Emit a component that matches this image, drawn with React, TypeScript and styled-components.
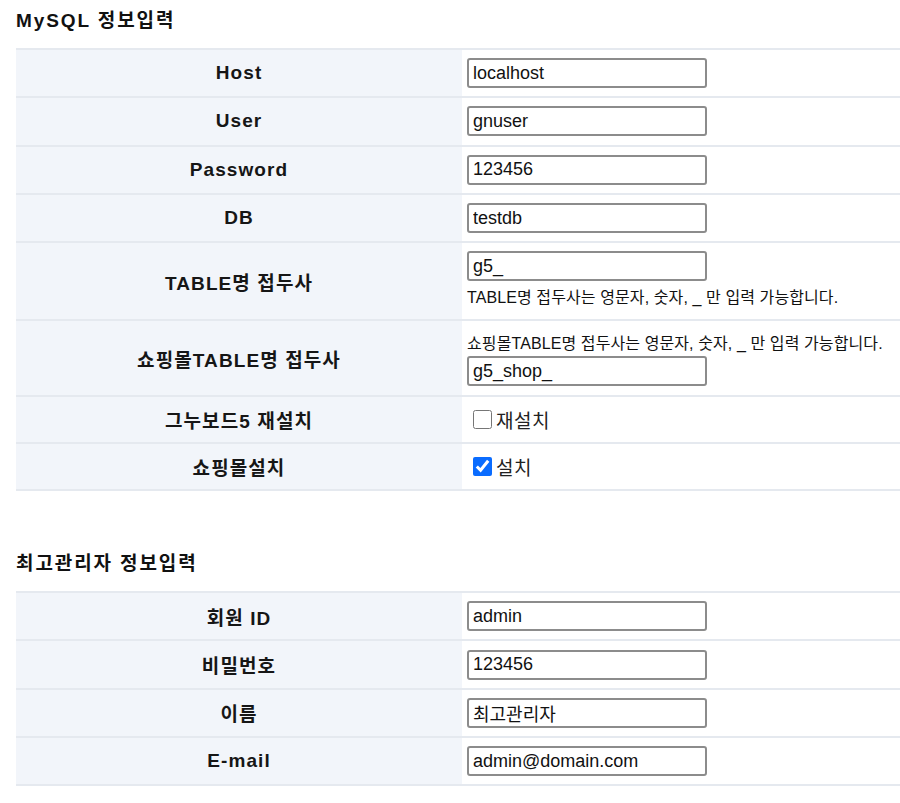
import React from 'react'
import styled, { createGlobalStyle } from 'styled-components'

const GlobalStyle = createGlobalStyle`
  body {
    margin: 0;
    background: #ffffff;
    font-family: "Liberation Sans", "Noto Sans CJK KR", sans-serif;
    color: #111111;
  }
`

const Page = styled.div`
  padding: 0 0 20px 16px;
  width: 884px;
`

const Title = styled.h2<{ top: number }>`
  margin: ${props => props.top}px 0 14px;
  font-size: 19px;
  line-height: 26px;
  font-weight: bold;
  letter-spacing: 1.9px;
`

const Table = styled.div`
  border-top: 2px solid #e5e9ef;
`

const Row = styled.div<{ h: number }>`
  display: grid;
  grid-template-columns: 446px 1fr;
  min-height: ${props => props.h}px;
  border-bottom: 2px solid #e5e9ef;
`

const Head = styled.div`
  background: #f2f5fa;
  display: flex;
  align-items: center;
  justify-content: center;
  font-size: 19px;
  font-weight: bold;
  letter-spacing: 1.1px;
  color: #161616;
`

const Cell = styled.div<{ pad?: string }>`
  display: flex;
  flex-direction: column;
  justify-content: center;
  align-items: flex-start;
  padding: ${props => props.pad || '0 5px'};
`

const Input = styled.input`
  box-sizing: border-box;
  width: 240px;
  height: 30px;
  border: 2px solid #8c8c8c;
  border-radius: 3px;
  padding: 0 4px;
  font-family: "Liberation Sans", "Noto Sans CJK KR", sans-serif;
  font-size: 18px;
  color: #111111;
  outline: none;
`

const Help = styled.div<{ mt?: number }>`
  margin-top: ${props => props.mt || 0}px;
  font-size: 16px;
  line-height: 22px;
  letter-spacing: 0.1px;
  color: #111111;
  white-space: nowrap;
`

const CheckLabel = styled.label`
  display: flex;
  align-items: center;
  gap: 4px;
  padding-left: 6px;
  font-size: 19px;
  letter-spacing: 0.5px;
  color: #222222;
`

const Check = styled.input`
  width: 19px;
  height: 19px;
  margin: 0;
  accent-color: #0a6cff;
`

type Field = { label: string; value: string }

const mysql: Field[] = [
  { label: 'Host', value: 'localhost' },
  { label: 'User', value: 'gnuser' },
  { label: 'Password', value: '123456' },
  { label: 'DB', value: 'testdb' },
]

const admin: Field[] = [
  { label: '회원 ID', value: 'admin' },
  { label: '비밀번호', value: '123456' },
  { label: '이름', value: '최고관리자' },
  { label: 'E-mail', value: 'admin@domain.com' },
]

export default function App() {
  return (
    <>
      <GlobalStyle />
      <Page>
        <Title top={8}>MySQL 정보입력</Title>
        <Table>
          {mysql.map(f => (
            <Row h={46.3} key={f.label}>
              <Head>{f.label}</Head>
              <Cell>
                <Input defaultValue={f.value} />
              </Cell>
            </Row>
          ))}
          <Row h={76}>
            <Head>TABLE명 접두사</Head>
            <Cell pad="8px 5px 10px">
              <Input defaultValue="g5_" />
              <Help mt={6}>TABLE명 접두사는 영문자, 숫자, _ 만 입력 가능합니다.</Help>
            </Cell>
          </Row>
          <Row h={74}>
            <Head>쇼핑몰TABLE명 접두사</Head>
            <Cell pad="12px 5px 9px">
              <Help>쇼핑몰TABLE명 접두사는 영문자, 숫자, _ 만 입력 가능합니다.</Help>
              <Input defaultValue="g5_shop_" style={{ marginTop: 1 }} />
            </Cell>
          </Row>
          <Row h={45}>
            <Head>그누보드5 재설치</Head>
            <Cell>
              <CheckLabel>
                <Check type="checkbox" />
                재설치
              </CheckLabel>
            </Cell>
          </Row>
          <Row h={45}>
            <Head>쇼핑몰설치</Head>
            <Cell>
              <CheckLabel>
                <Check type="checkbox" defaultChecked />
                설치
              </CheckLabel>
            </Cell>
          </Row>
        </Table>

        <Title top={60}>최고관리자 정보입력</Title>
        <Table>
          {admin.map(f => (
            <Row h={46.3} key={f.label}>
              <Head>{f.label}</Head>
              <Cell>
                <Input defaultValue={f.value} />
              </Cell>
            </Row>
          ))}
        </Table>
      </Page>
    </>
  )
}
